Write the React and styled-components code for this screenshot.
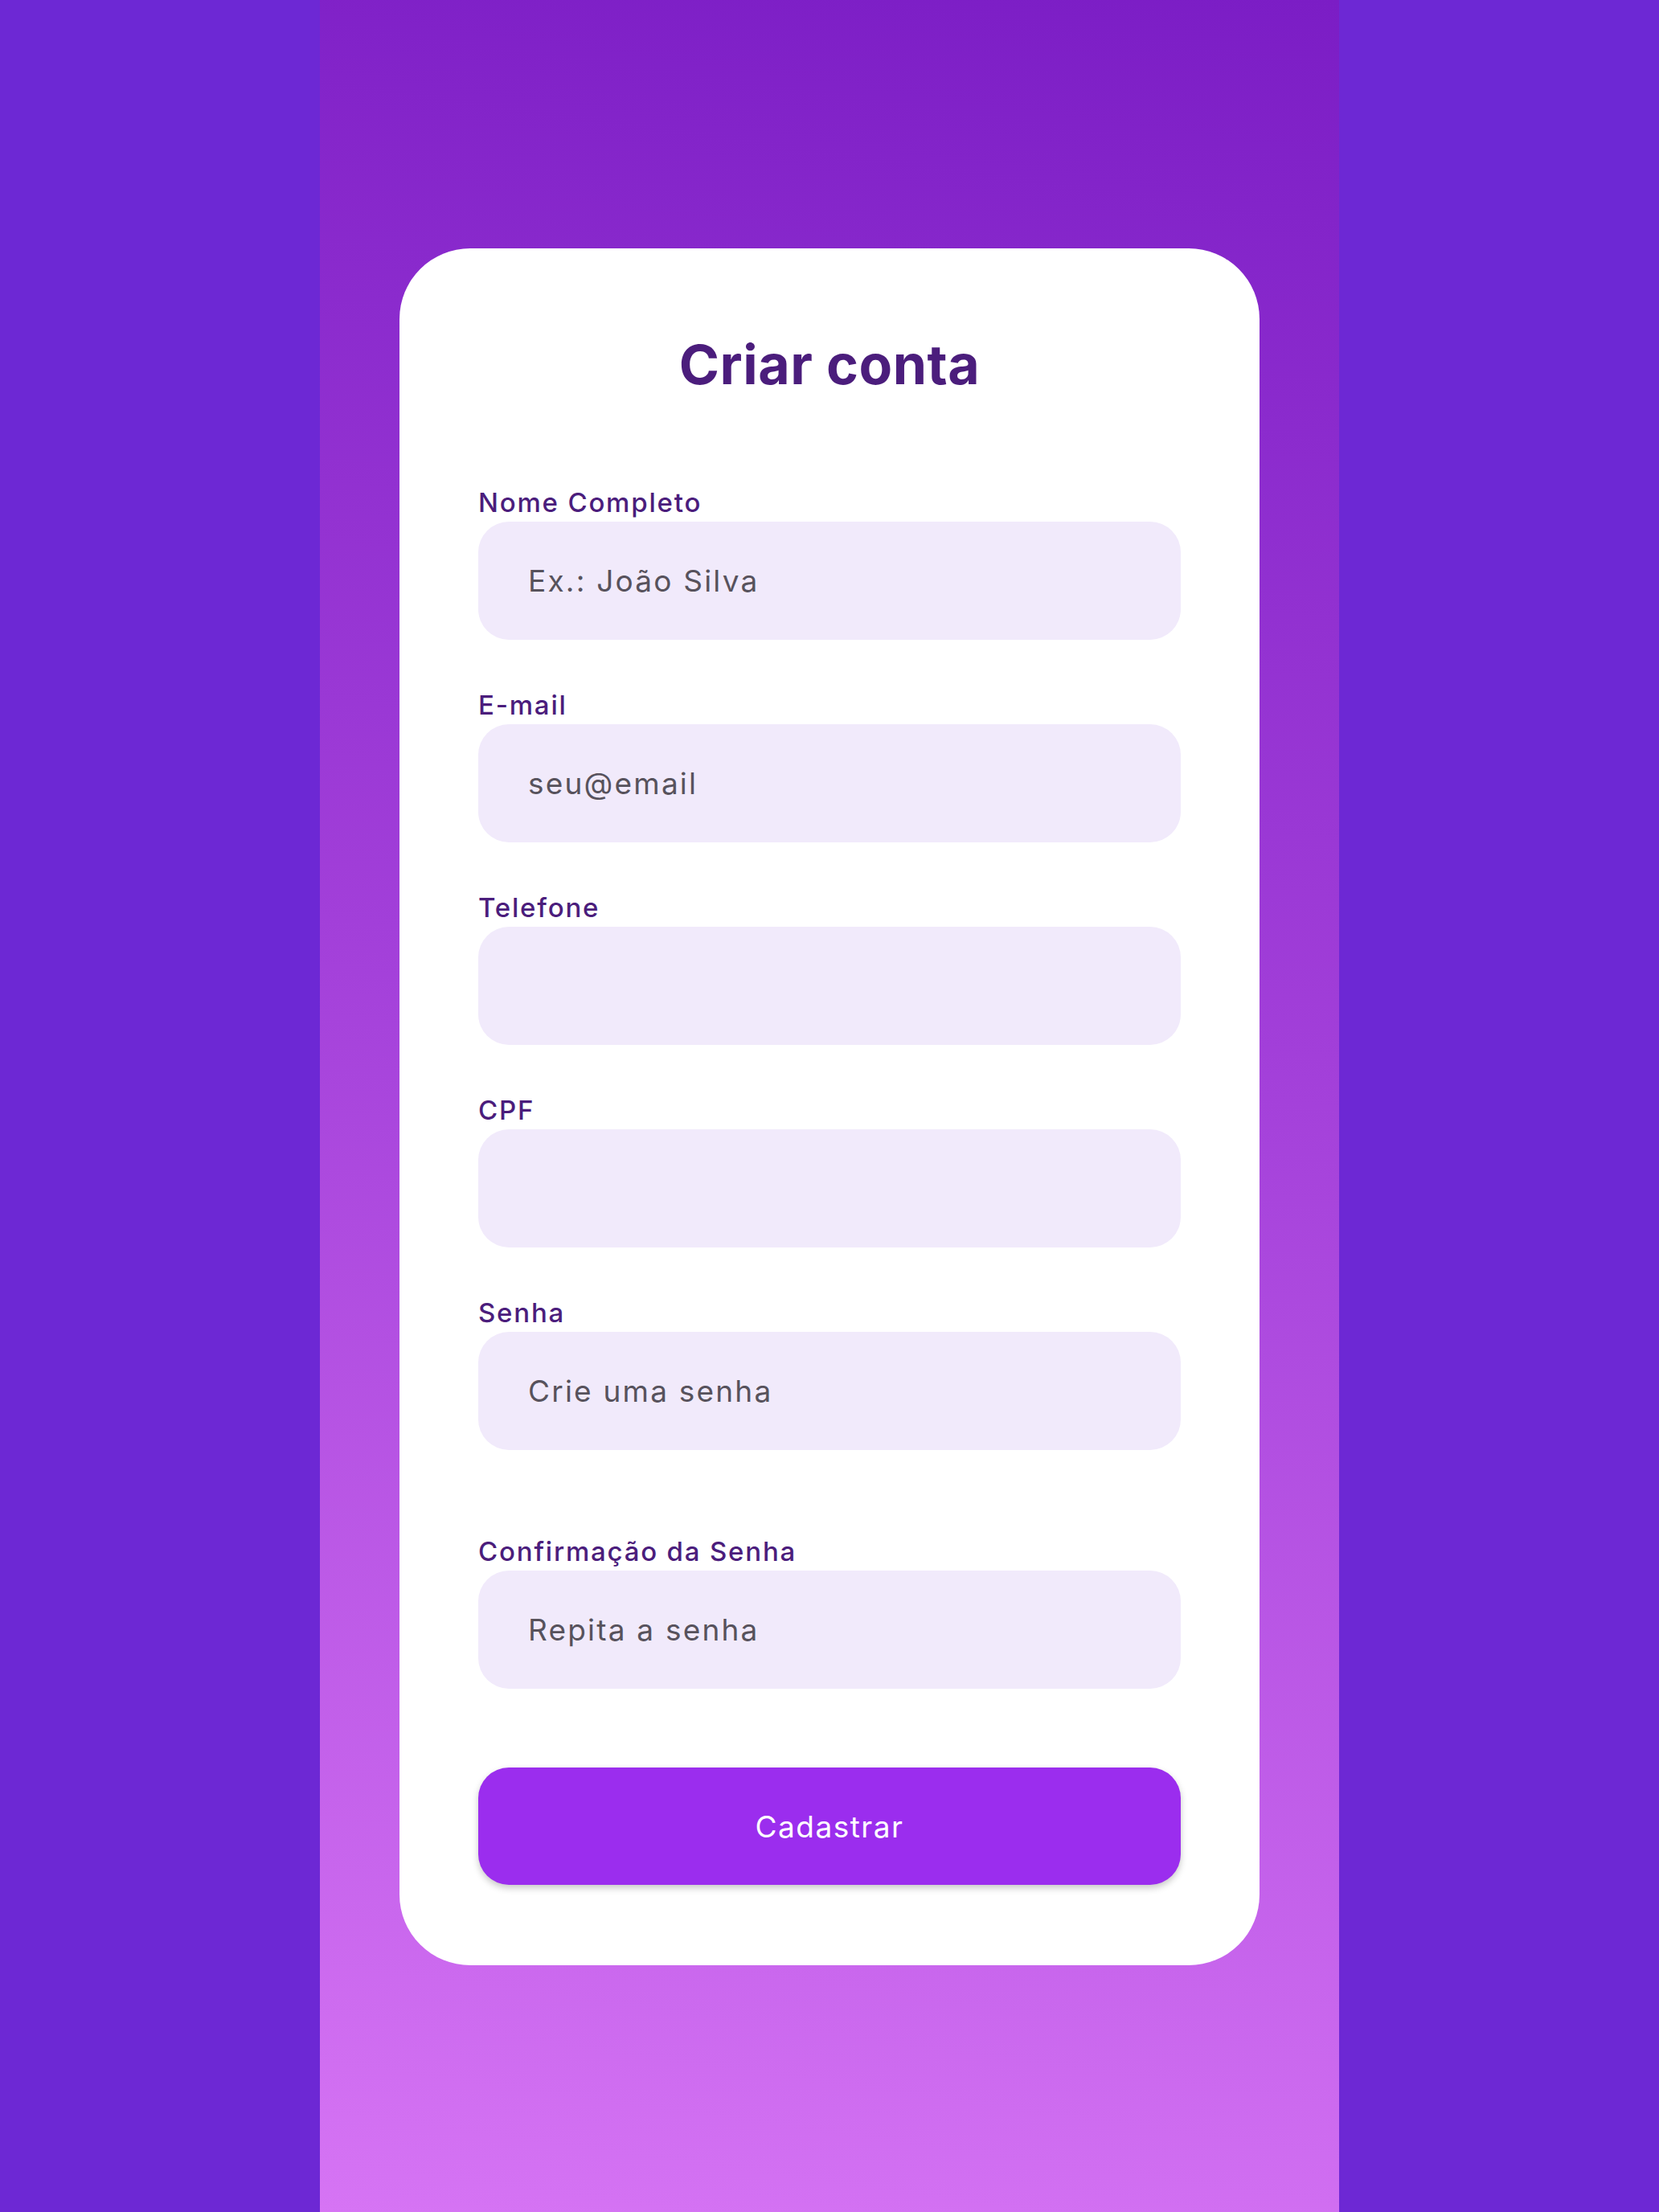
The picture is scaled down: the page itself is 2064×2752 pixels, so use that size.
import styled, { createGlobalStyle } from "styled-components";

const GlobalStyle = createGlobalStyle`
  * {
    box-sizing: border-box;
  }
  body {
    margin: 0;
    background: #6d28d4;
    font-family: Inter, "Noto Sans", sans-serif;
  }
`;

const fields = [
  { label: "Nome Completo", placeholder: "Ex.: João Silva" },
  { label: "E-mail", placeholder: "seu@email", type: "email" },
  { label: "Telefone", placeholder: "" },
  { label: "CPF", placeholder: "" },
  { label: "Senha", placeholder: "Crie uma senha", type: "password" },
  { label: "Confirmação da Senha", placeholder: "Repita a senha", type: "password", spaced: true },
];

const App = () => {
  return (
    <>
      <GlobalStyle />
      <Page>
        <Column>
          <Card>
            <Title>Criar conta</Title>
            <Form onSubmit={(e) => e.preventDefault()}>
              {fields.map((f) => (
                <Field key={f.label} $spaced={f.spaced}>
                  <Label>{f.label}</Label>
                  <Input type={f.type || "text"} placeholder={f.placeholder} />
                </Field>
              ))}
              <SubmitButton type='submit'>Cadastrar</SubmitButton>
            </Form>
          </Card>
        </Column>
      </Page>
    </>
  );
};

const Page = styled.div`
  display: flex;
  justify-content: center;
  min-height: 100vh;
  background: #6d28d4;
`;

const Column = styled.main`
  width: 1268px;
  min-height: 100vh;
  padding-top: 309px;
  display: flex;
  flex-direction: column;
  align-items: center;
  background: linear-gradient(188deg, #7b1dc5 0%, #a23fd9 45%, #d674f4 100%);
`;

const Card = styled.section`
  width: 1070px;
  padding: 105px 98px 100px;
  background: #ffffff;
  border-radius: 88px;
`;

const Title = styled.h1`
  margin: 0;
  text-align: center;
  font-size: 68px;
  line-height: 79px;
  font-weight: 700;
  color: #4b1d7c;
  letter-spacing: 0.5px;
`;

const Form = styled.form`
  display: flex;
  flex-direction: column;
  margin-top: 112px;
`;

const Field = styled.div`
  display: flex;
  flex-direction: column;
  gap: 4px;
  margin-top: ${({ $spaced }) => ($spaced ? "106px" : "61px")};

  &:first-child {
    margin-top: 0;
  }
`;

const Label = styled.label`
  font-size: 33px;
  line-height: 40px;
  font-weight: 500;
  color: #4b1d7c;
  letter-spacing: 1.8px;
`;

const Input = styled.input`
  height: 147px;
  width: 100%;
  border: none;
  outline: none;
  border-radius: 38px;
  background: #f1eafb;
  padding: 0 62px;
  font-family: Inter, "Noto Sans", sans-serif;
  font-size: 37px;
  letter-spacing: 2.2px;
  color: #2e2a33;

  &::placeholder {
    color: #57525c;
  }
`;

const SubmitButton = styled.button`
  margin-top: 98px;
  height: 146px;
  width: 100%;
  border: none;
  border-radius: 38px;
  background: #9b2dee;
  color: #ffffff;
  font-family: Inter, "Noto Sans", sans-serif;
  font-size: 37px;
  font-weight: 400;
  letter-spacing: 1.5px;
  box-shadow: 0 4px 8px rgba(0, 0, 0, 0.22);
  cursor: pointer;
`;

export default App;
